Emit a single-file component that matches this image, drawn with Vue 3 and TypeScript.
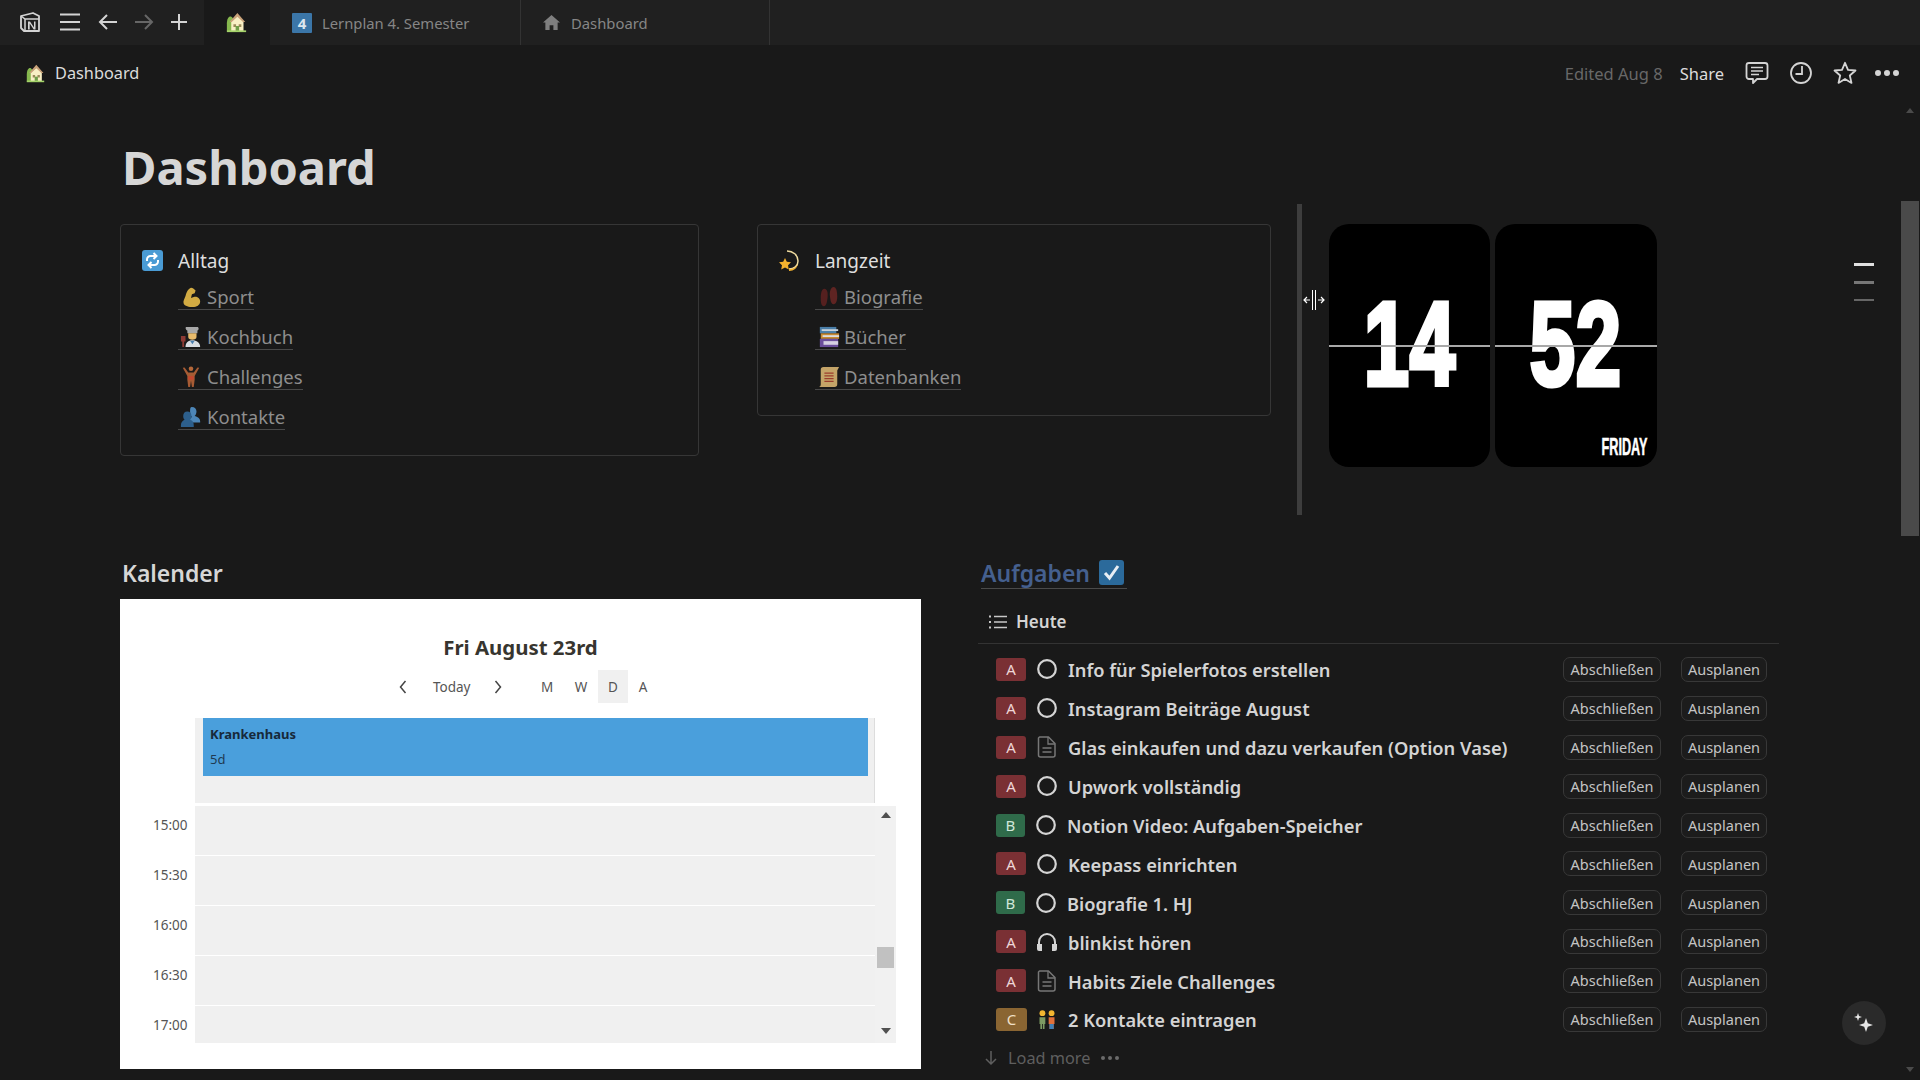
<script setup lang="ts">
interface Shape {
  d: string;
  fill: string;
}

interface LinkItem {
  label: string;
  icon: string;
}

interface Task {
  prio: 'A' | 'B' | 'C';
  icon: 'circle' | 'page' | 'headphones' | 'people';
  title: string;
}

const house: Shape[] = [
  { d: 'M1 22V13c0-5 2-8 4-8s4 3 4 8v9z', fill: '#86b84e' },
  { d: 'M6 22V11l7-7 7 7v11z', fill: '#f8efc4' },
  { d: 'M13 1L4 11.500h2.500L13 5.500l6.500 6H22z', fill: '#c9a27a' },
  { d: 'M8.500 14h3v3h-3zM14.500 14h3v3h-3z', fill: '#9a8a5a' },
  { d: 'M11 16h4v6h-4z', fill: '#6f9e48' },
  { d: 'M1 21h22v2H1z', fill: '#a5d36a' },
];

const glyphs: Record<string, Shape[]> = {
  muscle: [
    { d: 'M12 2C9 3 7 7 6 11c-1 3-3 6-2 8 1 3 6 4 10 4 4 0 8-2 8-6 0-4-4-6-7-5-1 0-2 1-3 1l1-4 3-1 1-3c-1-1-3-3-5-3z', fill: '#d2ab43' },
  ],
  chef: [
    { d: 'M7 1h12c1.500 0 2 3 0 4v3H8V5C6 4 5.500 1 7 1z', fill: '#a8a8a8' },
    { d: 'M9 8h9v4c0 2-2 3-4.500 3S9 14 9 12z', fill: '#e8bb6c' },
    { d: 'M6 23c0-5 3-7.500 7.500-7.500S22 18 22 23z', fill: '#d9dde2' },
    { d: 'M11 16h5l-2.500 4z', fill: '#4a7fb0' },
    { d: 'M1 11h5v6H4.500v6h-2v-6H1z', fill: '#8c3a34' },
  ],
  lifter: [
    { d: 'M3 2l2-.5L9 7h6l4-5.500 2 .5-5 9v4l-1 8h-2l-1-7-1 7H9l-1-8v-4z', fill: '#a65b34' },
    { d: 'M9.500 3a2.500 2.500 0 1 0 5 0a2.500 2.500 0 1 0-5 0z', fill: '#b5683a' },
    { d: 'M9 11h6v4H9z', fill: '#c4472f' },
  ],
  busts: [
    { d: 'M13 1c3 0 5 2 5 5 0 2-1 4-2 5 3 1 6 2 6 6v1H10v-2c0-2 1-3 3-4-1-1-2-3-2-6 0-3 0-5 2-5z', fill: '#4d86b8' },
    { d: 'M8 6c3 0 4.500 2 4.500 5 0 2-.5 3-1.500 4 3 1 4 3 4 6v2H1v-2c0-3 2-5 4-6-1-1-1.500-2-1.500-4C3.500 8 5 6 8 6z', fill: '#2d5f8c' },
  ],
  feet: [
    { d: 'M7 3c3 0 4 4 3.500 9-.5 4-1 10-4 10S3 18 3 13c0-5 1-10 4-10z', fill: '#55201f' },
    { d: 'M17 1c3 0 4 5 4 10s-1 9-4 9-3.500-5-4-9c-.5-5 1-10 4-10z', fill: '#5f2422' },
  ],
  books: [
    { d: 'M2 1h18v7H2z', fill: '#4a7ea8' },
    { d: 'M4 3.500h18v2H4z', fill: '#c9d2da' },
    { d: 'M3 8h20v6H3z', fill: '#c88a32' },
    { d: 'M5 10h18v2H5z', fill: '#ddd' },
    { d: 'M2 14h20v9H2z', fill: '#6b4e9b' },
    { d: 'M6 16.500h16v4H6z', fill: '#d6d0e2' },
  ],
  scroll: [
    { d: 'M6 1h17l-2 4v15c0 2-1 3-3 3H1c1 0 2-1 2-3V4c0-2 1-3 3-3z', fill: '#c4a468' },
    { d: 'M7 7h10v1.500H7zM7 10h10v1.500H7zM7 13h10v1.500H7zM7 16h10v1.500H7z', fill: '#9a3d2c' },
  ],
  people: [
    { d: 'M3 5a3.500 3.500 0 1 0 7 0a3.500 3.500 0 1 0-7 0z', fill: '#f2b530' },
    { d: 'M14 5a3.500 3.500 0 1 0 7 0a3.500 3.500 0 1 0-7 0z', fill: '#f2b530' },
    { d: 'M3 10h7v8H9v6H7v-6H6v6H4v-6H3z', fill: '#7d9a62' },
    { d: 'M14 10h7v8h-1v6h-2v-6h-1v6h-2v-6h-1z', fill: '#e0703a' },
    { d: 'M15 18h5v6h-5z', fill: '#3f7fb5' },
  ],
};

const daily: LinkItem[] = [
  { label: 'Sport', icon: 'muscle' },
  { label: 'Kochbuch', icon: 'chef' },
  { label: 'Challenges', icon: 'lifter' },
  { label: 'Kontakte', icon: 'busts' },
];

const longTerm: LinkItem[] = [
  { label: 'Biografie', icon: 'feet' },
  { label: 'Bücher', icon: 'books' },
  { label: 'Datenbanken', icon: 'scroll' },
];

const times: string[] = ['15:00', '15:30', '16:00', '16:30', '17:00'];

const tasks: Task[] = [
  { prio: 'A', icon: 'circle', title: 'Info für Spielerfotos erstellen' },
  { prio: 'A', icon: 'circle', title: 'Instagram Beiträge August' },
  { prio: 'A', icon: 'page', title: 'Glas einkaufen und dazu verkaufen (Option Vase)' },
  { prio: 'A', icon: 'circle', title: 'Upwork vollständig' },
  { prio: 'B', icon: 'circle', title: 'Notion Video: Aufgaben-Speicher' },
  { prio: 'A', icon: 'circle', title: 'Keepass einrichten' },
  { prio: 'B', icon: 'circle', title: 'Biografie 1. HJ' },
  { prio: 'A', icon: 'headphones', title: 'blinkist hören' },
  { prio: 'A', icon: 'page', title: 'Habits Ziele Challenges' },
  { prio: 'C', icon: 'people', title: '2 Kontakte eintragen' },
];
</script>

<template>
  <div class="app">
    <header class="tabbar">
      <div class="tools">
        <svg class="notion" viewBox="0 0 22 20" width="22" height="20">
          <path d="M2 4l12-3 6 3v15H5l-3-3z" fill="none" stroke="#d4d4d4" stroke-width="1.800" stroke-linejoin="round" />
          <path d="M2 4l4 3h14M6 7v12" fill="none" stroke="#d4d4d4" stroke-width="1.500" />
          <path d="M9 9.500h2l4 6v-6h1.500v8h-1.800l-4-6v6H9z" fill="#d4d4d4" />
        </svg>
        <svg class="tool-burger" viewBox="0 0 20 18" width="20" height="18">
          <path d="M0 1.500h20M0 9h20M0 16.500h20" stroke="#d4d4d4" stroke-width="2" />
        </svg>
        <svg viewBox="0 0 20 18" width="20" height="18">
          <path d="M19 9H2M9 2L2 9l7 7" fill="none" stroke="#d4d4d4" stroke-width="2" />
        </svg>
        <svg viewBox="0 0 20 18" width="20" height="18">
          <path d="M1 9h17M11 2l7 7-7 7" fill="none" stroke="#666" stroke-width="2" />
        </svg>
        <svg viewBox="0 0 18 18" width="18" height="18">
          <path d="M9 1v16M1 9h16" stroke="#d4d4d4" stroke-width="2" />
        </svg>
      </div>
      <div class="tab tab-active">
        <svg viewBox="0 0 24 24" width="21" height="21">
          <path v-for="(s, i) in house" :key="i" :d="s.d" :fill="s.fill" />
        </svg>
      </div>
      <div class="tab tab-wide tab-plan">
        <span class="keycap">4</span>
        <span>Lernplan 4. Semester</span>
      </div>
      <div class="tab tab-wide tab-dash">
        <svg class="tab-home" viewBox="0 0 18 18" width="17" height="17">
          <path d="M9 1l9 8h-2.500v8H11v-5H7v5H2.500V9H0z" fill="#7f7f7f" />
        </svg>
        <span>Dashboard</span>
      </div>
    </header>

    <div class="topbar">
      <div class="crumb">
        <svg viewBox="0 0 24 24" width="19" height="19">
          <path v-for="(s, i) in house" :key="i" :d="s.d" :fill="s.fill" />
        </svg>
        <span>Dashboard</span>
      </div>
      <div class="actions">
        <span class="edited">Edited Aug 8</span>
        <span class="share">Share</span>
        <svg class="act" viewBox="0 0 24 24" width="24" height="24">
          <path d="M4 2h16a2.500 2.500 0 0 1 2.500 2.500v11A2.500 2.500 0 0 1 20 18h-8l-4 4v-4H4a2.500 2.500 0 0 1-2.500-2.500v-11A2.500 2.500 0 0 1 4 2z" fill="none" stroke="#d4d4d4" stroke-width="1.800" stroke-linejoin="round" />
          <path d="M6 6.500h12M6 10h12M6 13.500h8" stroke="#d4d4d4" stroke-width="1.600" />
        </svg>
        <svg class="act" viewBox="0 0 24 24" width="24" height="24">
          <circle cx="12" cy="12" r="10" fill="none" stroke="#d4d4d4" stroke-width="1.800" />
          <path d="M13 5v8H6.500" fill="none" stroke="#d4d4d4" stroke-width="1.800" />
        </svg>
        <svg class="act act-star" viewBox="0 0 24 24" width="24" height="24">
          <path d="M12 1.800l3 7 7.500.7-5.700 5 1.700 7.400L12 18l-6.500 3.900 1.700-7.400-5.700-5 7.500-.7z" fill="none" stroke="#d4d4d4" stroke-width="1.800" stroke-linejoin="round" />
        </svg>
        <svg class="act act-dots" viewBox="0 0 24 6" width="24" height="6">
          <path d="M0 3a3 3 0 1 0 6 0a3 3 0 1 0-6 0zM9 3a3 3 0 1 0 6 0a3 3 0 1 0-6 0zM18 3a3 3 0 1 0 6 0a3 3 0 1 0-6 0z" fill="#d4d4d4" />
        </svg>
      </div>
    </div>

    <div class="main">
      <div class="page">
        <h1 class="title">Dashboard</h1>

        <section class="top-row">
          <div class="card card-daily">
            <div class="card-head">
              <svg class="head-icon" viewBox="0 0 21 21" width="21" height="21">
                <rect width="21" height="21" rx="3" fill="#4a9bd4" />
                <path d="M5 11V9.500A3.500 3.500 0 0 1 8.500 6H13M11.500 3l3 3-3 3M16 10v1.500A3.500 3.500 0 0 1 12.500 15H8M9.500 18l-3-3 3-3" fill="none" stroke="#fff" stroke-width="2" />
              </svg>
              <span>Alltag</span>
            </div>
            <a v-for="item in daily" :key="item.label" class="link">
              <svg class="link-icon" viewBox="0 0 24 24" width="22" height="22">
                <path v-for="(s, i) in glyphs[item.icon]" :key="i" :d="s.d" :fill="s.fill" />
              </svg>
              <span>{{ item.label }}</span>
            </a>
          </div>

          <div class="card card-long">
            <div class="card-head">
              <svg class="head-icon" viewBox="0 0 21 21" width="21" height="21">
                <path d="M8 1c6 0 11 4 11 10 0 5-4 8-9 8" fill="none" stroke="#f0dca0" stroke-width="1.500" />
                <path d="M6 8l1.800 3.800 4.200.5-3 2.900.8 4.300L6 17.400 2.200 19.500l.8-4.300-3-2.900 4.200-.5z" fill="#f5b32e" />
                <path d="M10 19c4 0 7-1 9-5-1 4-4 7-9 7z" fill="#f5b32e" />
              </svg>
              <span>Langzeit</span>
            </div>
            <a v-for="item in longTerm" :key="item.label" class="link">
              <svg class="link-icon" viewBox="0 0 24 24" width="22" height="22">
                <path v-for="(s, i) in glyphs[item.icon]" :key="i" :d="s.d" :fill="s.fill" />
              </svg>
              <span>{{ item.label }}</span>
            </a>
          </div>

          <div class="resize-bar">
            <svg class="cursor" viewBox="0 0 22 20" width="22" height="20">
              <path d="M9.500 0v20M12.500 0v20" stroke="#fff" stroke-width="1" />
              <path d="M1 10h6M4 7l-3 3 3 3M21 10h-6M18 7l3 3-3 3" fill="none" stroke="#fff" stroke-width="1.200" />
            </svg>
          </div>

          <div class="clock">
            <div class="flip">
              <span class="digits">14</span>
              <i class="flip-line"></i>
            </div>
            <div class="flip">
              <span class="digits">52</span>
              <i class="flip-line"></i>
              <span class="weekday">FRIDAY</span>
            </div>
          </div>

          <div class="toc">
            <i class="toc-a"></i>
            <i class="toc-b"></i>
            <i class="toc-c"></i>
          </div>
        </section>

        <section class="bottom-row">
          <div class="col-left">
            <h2 class="heading">Kalender</h2>
            <div class="calendar">
              <div class="cal-title">Fri August 23rd</div>
              <div class="cal-nav">
                <svg class="chev" viewBox="0 0 8 14" width="8" height="14">
                  <path d="M6.500 1L1.500 7l5 6" fill="none" stroke="#444" stroke-width="1.500" />
                </svg>
                <span class="today">Today</span>
                <svg class="chev" viewBox="0 0 8 14" width="8" height="14">
                  <path d="M1.500 1l5 6-5 6" fill="none" stroke="#444" stroke-width="1.500" />
                </svg>
                <div class="views">
                  <span>M</span>
                  <span>W</span>
                  <span class="view-on">D</span>
                  <span>A</span>
                </div>
              </div>
              <div class="all-day">
                <div class="event">
                  <strong>Krankenhaus</strong>
                  <span>5d</span>
                </div>
              </div>
              <div class="grid-wrap">
                <div class="hours">
                  <div v-for="t in times" :key="t" class="hour">
                    <span class="hour-label">{{ t }}</span>
                    <div class="hour-cell"></div>
                  </div>
                </div>
                <div class="cal-scroll">
                  <i class="tri-up"></i>
                  <i class="cal-thumb"></i>
                  <i class="tri-down"></i>
                </div>
              </div>
            </div>
          </div>

          <div class="col-right">
            <h2 class="heading heading-link">
              <span>Aufgaben</span>
              <svg viewBox="0 0 25 25" width="25" height="25">
                <rect width="25" height="25" rx="3" fill="#2b6a9b" />
                <path d="M6 13l4.500 5L19 6" fill="none" stroke="#e8eef4" stroke-width="3" />
              </svg>
            </h2>
            <div class="view-tab">
              <svg viewBox="0 0 18 14" width="18" height="14">
                <path d="M5 1.500h13M5 7h13M5 12.500h13" stroke="#c8c8c8" stroke-width="1.400" />
                <path d="M0 .5h2v2H0zM0 6h2v2H0zM0 11.500h2v2H0z" fill="#c8c8c8" />
              </svg>
              <span>Heute</span>
            </div>
            <div class="tasks">
              <div v-for="task in tasks" :key="task.title" class="task">
                <span class="prio" :class="'prio-' + task.prio">{{ task.prio }}</span>
                <svg v-if="task.icon === 'circle'" class="task-icon" viewBox="0 0 20 20" width="20" height="20">
                  <circle cx="10" cy="10" r="8.800" fill="none" stroke="#d4d4d4" stroke-width="2.200" />
                </svg>
                <svg v-else-if="task.icon === 'page'" class="task-icon" viewBox="0 0 20 22" width="20" height="22">
                  <path d="M2.500 1h9L18 7.500V19a2 2 0 0 1-2 2H3.500a2 2 0 0 1-2-2V2z" fill="none" stroke="#777" stroke-width="1.500" stroke-linejoin="round" />
                  <path d="M11 1v7h7M5.500 12h9M5.500 16h9" fill="none" stroke="#777" stroke-width="1.300" />
                </svg>
                <svg v-else-if="task.icon === 'headphones'" class="task-icon" viewBox="0 0 20 20" width="20" height="20">
                  <path d="M2 13v-3a8 8 0 0 1 16 0v3" fill="none" stroke="#d4d4d4" stroke-width="2" />
                  <path d="M0 12h5v7H2a2 2 0 0 1-2-2zM15 12h5v5a2 2 0 0 1-2 2h-3z" fill="#d4d4d4" />
                </svg>
                <svg v-else class="task-icon" viewBox="0 0 24 24" width="20" height="20">
                  <path v-for="(s, i) in glyphs.people" :key="i" :d="s.d" :fill="s.fill" />
                </svg>
                <span class="task-title">{{ task.title }}</span>
                <div class="task-btns">
                  <button class="btn btn-done">Abschließen</button>
                  <button class="btn btn-plan">Ausplanen</button>
                </div>
              </div>
            </div>
            <div class="load-more">
              <svg viewBox="0 0 14 16" width="14" height="16">
                <path d="M7 1v13M2 9l5 5 5-5" fill="none" stroke="#5f5f5f" stroke-width="1.500" />
              </svg>
              <span>Load more</span>
              <svg class="more-dots" viewBox="0 0 18 4" width="18" height="4">
                <path d="M0 2a2 2 0 1 0 4 0a2 2 0 1 0-4 0zM7 2a2 2 0 1 0 4 0a2 2 0 1 0-4 0zM14 2a2 2 0 1 0 4 0a2 2 0 1 0-4 0z" fill="#6b6b6b" />
              </svg>
            </div>
          </div>
        </section>
      </div>

      <aside class="scrollbar">
        <i class="arrow-up"></i>
        <i class="thumb"></i>
        <i class="arrow-down"></i>
      </aside>
    </div>

    <button class="ai-btn">
      <svg viewBox="0 0 20 20" width="20" height="20">
        <path d="M12 5l1.800 5.200L19 12l-5.200 1.800L12 19l-1.800-5.200L5 12l5.200-1.800z" fill="#e6e6e6" />
        <path d="M4 0l1 3 3 1-3 1-1 3-1-3-3-1 3-1z" fill="#e6e6e6" />
      </svg>
    </button>
  </div>
</template>

<style>
html,
body {
  background: #191919;
  overflow: hidden;
}
</style>

<style scoped>
.app {
  position: relative;
  display: flex;
  flex-direction: column;
  width: 1920px;
  height: 1080px;
  overflow: hidden;
  background: #191919;
  color: #d4d4d4;
  font-family: "Noto Sans", "Open Sans", sans-serif;
}

.tabbar {
  display: flex;
  flex: none;
  height: 45px;
  background: #202020;
}

.tools {
  display: flex;
  align-items: center;
  width: 204px;
  padding: 0 0 1px 19px;
  box-sizing: border-box;
}

.tools svg {
  margin-right: 16px;
}

.tools .notion {
  margin-right: 19px;
}

.tools .tool-burger {
  margin-right: 18px;
}

.tab {
  display: flex;
  align-items: center;
  box-sizing: border-box;
  font-size: 14.800px;
  color: #868686;
}

.tab-active {
  justify-content: center;
  width: 66px;
  padding-right: 2px;
  background: #191919;
}

.tab-wide {
  padding-left: 22px;
  border-right: 1px solid #333;
}

.tab-plan {
  width: 251px;
}

.tab-dash {
  width: 249px;
}

.keycap {
  display: flex;
  align-items: center;
  justify-content: center;
  width: 20px;
  height: 20px;
  margin-right: 10px;
  background: #3b76a8;
  border-radius: 1px;
  color: #dce6ee;
  font-size: 15px;
  font-weight: 700;
}

.tab-home {
  margin-right: 11px;
}

.topbar {
  display: flex;
  flex: none;
  align-items: center;
  justify-content: space-between;
  height: 45px;
  padding: 11px 21px 0 26px;
  box-sizing: border-box;
}

.crumb {
  display: flex;
  align-items: center;
  gap: 10px;
  font-size: 16.300px;
  color: #dcdcdc;
}

.actions {
  display: flex;
  align-items: center;
  font-size: 16.500px;
}

.edited {
  margin-right: 17px;
  color: #686868;
}

.share {
  margin-right: 21px;
  color: #dcdcdc;
}

.act {
  margin-right: 20px;
}

.act-star {
  margin-right: 18px;
}

.act-dots {
  margin-right: 0;
}

.main {
  display: flex;
  flex: 1;
  min-height: 0;
}

.page {
  flex: 1;
  min-width: 0;
  padding: 47px 0 0 120px;
}

.title {
  margin: 0 0 0 2px;
  height: 67px;
  font-size: 47px;
  line-height: 60px;
  font-weight: 700;
  color: #d6d6d6;
}

.top-row {
  display: flex;
  align-items: flex-start;
  height: 311px;
}

.card {
  box-sizing: border-box;
  margin-top: 20px;
  padding: 19px 0 0 21px;
  border: 1px solid #363636;
  border-radius: 4px;
}

.card-daily {
  width: 579px;
  height: 232px;
  margin-right: 58px;
}

.card-long {
  width: 514px;
  height: 192px;
  margin-right: 26px;
}

.card-head {
  display: flex;
  align-items: center;
  height: 33px;
  margin-bottom: 2px;
  font-size: 19px;
  color: #dedede;
}

.head-icon {
  margin-right: 15px;
}

.link {
  display: flex;
  align-items: center;
  width: max-content;
  height: 31px;
  margin: 0 0 9px 36px;
  padding-top: 5px;
  border-bottom: 1px solid #484848;
  box-sizing: border-box;
  font-size: 18.500px;
  color: #8e8e8e;
}

.link-icon {
  margin-right: 5px;
  margin-left: 2px;
}

.card-long .link-icon {
  margin-right: 4px;
  margin-left: 3px;
}

.resize-bar {
  position: relative;
  flex: none;
  width: 5px;
  height: 311px;
  margin-right: 27px;
  background: #3d3d3d;
}

.cursor {
  position: absolute;
  top: 86px;
  left: 6px;
}

.clock {
  display: flex;
  flex: none;
  gap: 5px;
  margin-top: 20px;
}

.flip {
  position: relative;
  display: flex;
  align-items: center;
  justify-content: center;
  width: 161px;
  height: 243px;
  background: #000;
  border-radius: 20px;
  overflow: hidden;
}

.flip + .flip {
  width: 162px;
}

.digits {
  margin-top: -3px;
  color: #fff;
  font-family: "Liberation Sans", sans-serif;
  font-size: 118px;
  font-weight: 700;
  letter-spacing: 1px;
  -webkit-text-stroke: 5px #fff;
  transform: scaleX(0.69);
}

.flip-line {
  position: absolute;
  top: 121px;
  left: 0;
  right: 0;
  height: 1.500px;
  background: #a8a8a8;
}

.weekday {
  position: absolute;
  right: 10px;
  bottom: 6px;
  color: #fff;
  font-family: "Liberation Sans", sans-serif;
  font-size: 23px;
  font-weight: 700;
  -webkit-text-stroke: 0.500px #fff;
  transform: scaleX(0.55);
  transform-origin: right center;
}

.toc {
  display: flex;
  flex-direction: column;
  gap: 15px;
  margin: 59px 0 0 197px;
}

.toc i {
  display: block;
  width: 20px;
}

.toc-a {
  height: 3px;
  background: #e0e0e0;
}

.toc-b {
  height: 3px;
  background: #777;
}

.toc-c {
  height: 2px;
  background: #666;
}

.bottom-row {
  display: flex;
  gap: 57px;
  margin-top: 40px;
}

.col-left {
  width: 801px;
}

.heading {
  display: flex;
  align-items: center;
  margin: 0 0 0 2px;
  height: 36px;
  font-size: 23px;
  font-weight: 600;
  color: #d6d6d6;
}

.col-left .heading {
  margin-bottom: 8px;
  padding-bottom: 1px;
  box-sizing: border-box;
}

.calendar {
  box-sizing: border-box;
  height: 470px;
  padding-top: 32px;
  background: #fff;
  color: #555;
  font-size: 13.500px;
}

.cal-title {
  text-align: center;
  height: 32px;
  line-height: 32px;
  font-size: 20.400px;
  font-weight: 700;
  color: #37352f;
}

.cal-nav {
  display: flex;
  align-items: center;
  height: 33px;
  margin-top: 7px;
  padding-left: 279px;
}

.today {
  width: 36px;
  margin: 0 25px 0 26px;
  text-align: center;
}

.views {
  display: flex;
  margin-left: 28px;
}

.views span {
  display: flex;
  align-items: center;
  justify-content: center;
  width: 30px;
  height: 33px;
}

.views span:nth-child(1),
.views span:nth-child(2) {
  width: 34px;
}

.view-on {
  background: #f0f0f0;
}

.all-day {
  box-sizing: border-box;
  width: 680px;
  height: 85px;
  margin: 15px 0 0 75px;
  padding: 0 6px 0 8px;
  background: #f0f0f0;
  border-right: 1px solid #ddd;
}

.event {
  display: flex;
  flex-direction: column;
  box-sizing: border-box;
  height: 58px;
  padding: 8px 7px;
  gap: 8px;
  background: #4a9fdc;
  font-size: 13px;
  line-height: 17px;
  color: #1f3a52;
}

.event strong {
  font-weight: 700;
  color: #17293a;
}

.grid-wrap {
  display: flex;
  margin-top: 3px;
  margin-left: 33px;
}

.hours {
  width: 722px;
}

.hour {
  display: flex;
  height: 50px;
}

.hour:last-child {
  height: 37px;
}

.hour-label {
  width: 34px;
  margin-right: 8px;
  line-height: 38px;
  text-align: right;
}

.hour-cell {
  flex: 1;
  background: #f0f0f0;
  border-bottom: 1px solid #fff;
}

.hour:last-child .hour-cell {
  border-bottom: 0;
}

.cal-scroll {
  display: flex;
  flex-direction: column;
  align-items: center;
  width: 21px;
  background: #f1f1f1;
}

.tri-up {
  margin-top: 6px;
  border: 5px solid transparent;
  border-top: 0;
  border-bottom: 6px solid #505050;
}

.cal-thumb {
  width: 17px;
  height: 21px;
  margin-top: 129px;
  background: #c1c1c1;
}

.tri-down {
  margin-top: auto;
  margin-bottom: 9px;
  border: 5px solid transparent;
  border-bottom: 0;
  border-top: 6px solid #505050;
}

.col-right {
  width: 801px;
}

.heading-link {
  gap: 9px;
  width: max-content;
  height: 34px;
  margin-left: 3px;
  margin-bottom: 2px;
  padding: 2px 3px 0 0;
  box-sizing: border-box;
  color: #45608f;
  border-bottom: 1px solid #4a4a4a;
}

.view-tab {
  display: flex;
  align-items: center;
  gap: 9px;
  height: 53px;
  padding: 9px 0 0 11px;
  box-sizing: border-box;
  border-bottom: 1px solid #333;
  font-size: 17px;
  font-weight: 600;
  color: #d4d4d4;
}

.tasks {
  margin-top: 6px;
}

.task {
  display: flex;
  align-items: center;
  height: 38.900px;
  padding: 0 12px 0 18px;
}

.prio {
  display: flex;
  align-items: center;
  justify-content: center;
  flex: none;
  width: 30px;
  height: 23px;
  margin-right: 11px;
  border-radius: 3px;
  font-size: 15px;
}

.prio-A {
  background: #7a3034;
  color: #eed6d6;
}

.prio-B {
  width: 29px;
  background: #2f6b4a;
  color: #cfe6d8;
}

.prio-C {
  width: 31px;
  margin-right: 10px;
  background: #8a6532;
  color: #f0e0c8;
}

.task-icon {
  flex: none;
  margin-right: 11px;
}

.task-title {
  padding-top: 1px;
  font-size: 18.300px;
  font-weight: 600;
  color: #d4d4d4;
  white-space: nowrap;
}

.task-btns {
  display: flex;
  gap: 20px;
  margin-left: auto;
}

.btn {
  height: 25px;
  padding: 0;
  background: #1c1c1c;
  border: 1px solid #383838;
  border-radius: 7px;
  color: #c4c4c4;
  font-family: inherit;
  font-size: 14.500px;
  line-height: 1;
}

.btn-done {
  width: 98px;
}

.btn-plan {
  width: 86px;
}

.load-more {
  display: flex;
  align-items: center;
  height: 38px;
  padding-left: 6px;
  font-size: 16.300px;
  color: #5f5f5f;
}

.load-more svg:first-child {
  margin-right: 10px;
}

.more-dots {
  margin-left: 11px;
}

.scrollbar {
  display: flex;
  flex: none;
  flex-direction: column;
  align-items: center;
  width: 18px;
  margin-right: 1px;
}

.arrow-up {
  margin-top: 18px;
  border: 4px solid transparent;
  border-top: 0;
  border-bottom: 5px solid #4a4a4a;
}

.thumb {
  width: 18px;
  height: 335px;
  margin-top: 88px;
  background: #4a4a4a;
}

.arrow-down {
  margin-top: auto;
  margin-bottom: 8px;
  border: 4px solid transparent;
  border-bottom: 0;
  border-top: 5px solid #4a4a4a;
}

.ai-btn {
  position: absolute;
  right: 34px;
  bottom: 35px;
  display: flex;
  align-items: center;
  justify-content: center;
  width: 44px;
  height: 44px;
  padding: 0;
  background: #2a2a2a;
  border: 0;
  border-radius: 50%;
}
</style>
